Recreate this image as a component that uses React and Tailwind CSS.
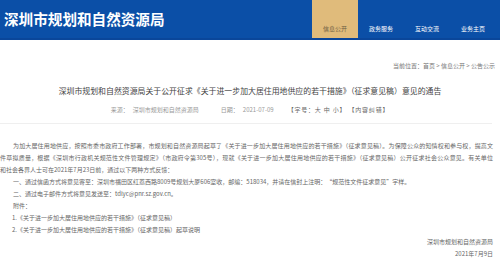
export default function App() {
  const font = { fontFamily: '"Noto Sans CJK SC", "Noto Sans", sans-serif' };
  const tabs = ["信息公开", "政务服务", "互动交流", "业务主页"];
  return (
    <div className="w-[500px] h-[260px] bg-white overflow-hidden" style={font}>
      <div className="h-[40px] bg-[#0b4fa7] border-b-2 border-[#0a469a] flex items-stretch">
        <div className="flex items-center pl-[4px] flex-1">
          <span className="text-white font-bold text-[14.6px] leading-none">深圳市规划和自然资源局</span>
        </div>
        <div className="flex items-stretch mr-[4px]">
          {tabs.map((t, i) => (
            <div
              key={t}
              className={
                "w-[46px] flex items-end justify-center pb-[6px] text-[6px] leading-none " +
                (i === 0 ? "bg-[#e0bb7b] text-[#6e5d42]" : "text-white")
              }
            >
              {t}
            </div>
          ))}
        </div>
      </div>

      <div className="flex justify-end pr-[5px] pt-[23px] text-[6px] leading-none text-[#777]">
        当前位置：首页 &gt; 信息公开 &gt; 公告公示
      </div>

      <div className="text-center text-[7.9px] leading-none text-[#444] mt-[18px] whitespace-nowrap">
        深圳市规划和自然资源局关于公开征求《关于进一步加大居住用地供应的若干措施》（征求意见稿）意见的通告
      </div>

      <div className="flex justify-center text-[6px] leading-none text-[#999] mt-[12px] whitespace-nowrap">
        <span>来源：&nbsp;&nbsp; 深圳市规划和自然资源局</span>
        <span className="ml-[22px]">日期：&nbsp;&nbsp; 2021-07-09</span>
        <span className="ml-[14px] text-[#666] tracking-[0.8px]">【字号：大 中 小】 【内容纠错】</span>
      </div>

      <div className="h-px bg-[#efefef] mt-[10px] mr-[8px]" />

      <div className="pr-[7px] pt-[16px] text-[6px] leading-[12px] text-[#666] whitespace-nowrap">
        <div className="pl-[13px] [text-align-last:justify] text-justify">
          为加大居住用地供应，按照市委市政府工作部署，市规划和自然资源局起草了《关于进一步加大居住用地供应的若干措施》（征求意见稿）。为保障公众的知情权和参与权，提高文
        </div>
        <div className="[text-align-last:justify] text-justify">
          件草拟质量，根据《深圳市行政机关规范性文件管理规定》（市政府令第305号），现就《关于进一步加大居住用地供应的若干措施》（征求意见稿）公开征求社会公众意见。有关单位
        </div>
        <div>和社会各界人士可在2021年7月23日前，通过以下两种方式反馈：</div>
        <div className="pl-[13px]">
          一、通过信函方式将意见寄至：深圳市福田区红荔西路8009号规划大厦606室收，邮编：518034，并请在信封上注明：“规范性文件征求意见”字样。
        </div>
        <div className="pl-[13px]">二、通过电子邮件方式将意见发送至：tdlyc@pnr.sz.gov.cn。</div>
        <div className="pl-[13px]">附件：</div>
        <div className="pl-[12px]">1.《关于进一步加大居住用地供应的若干措施》（征求意见稿）</div>
        <div className="pl-[12px]">2.《关于进一步加大居住用地供应的若干措施》（征求意见稿）起草说明</div>
        <div className="text-right">深圳市规划和自然资源局</div>
        <div className="text-right">2021年7月9日</div>
      </div>
    </div>
  );
}
